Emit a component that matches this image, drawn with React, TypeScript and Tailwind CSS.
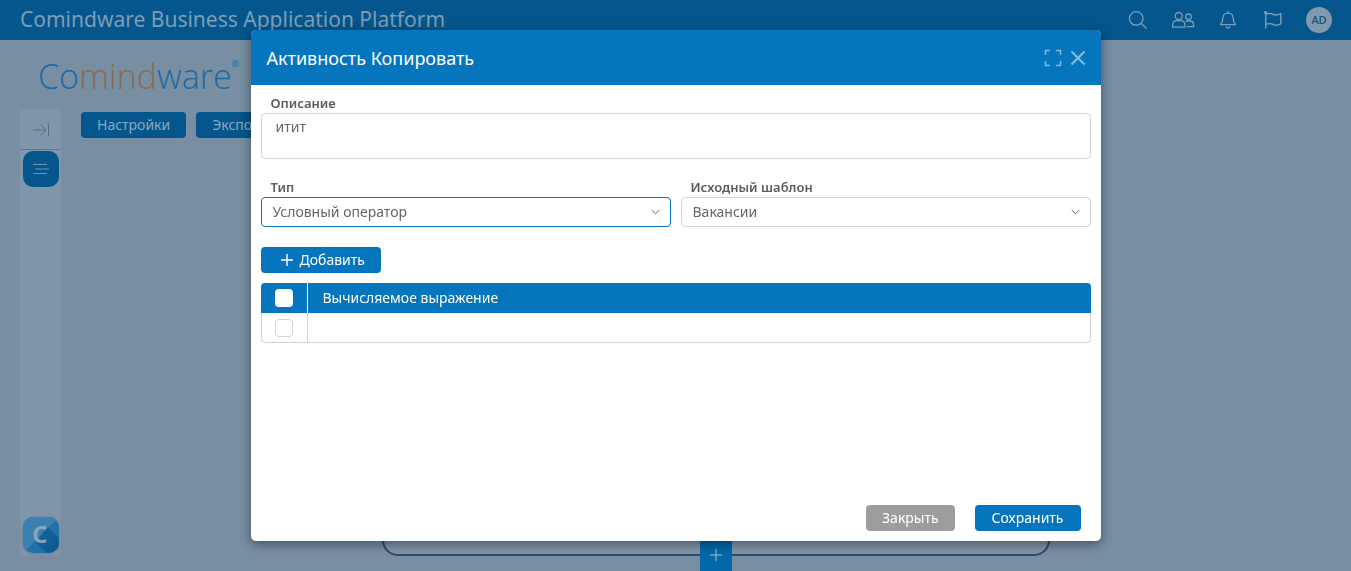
import type { ReactNode } from "react";

const primaryButton =
  "h-[26px] rounded bg-[#0575bd] text-sm leading-5 text-white";

function SearchIcon() {
  return (
    <svg width="20" height="20" viewBox="0 0 20 20" fill="none" stroke="currentColor" strokeWidth="1.3">
      <circle cx="8.2" cy="8.4" r="6.8" />
      <path d="M13.2 13.4 18.6 18.4" />
    </svg>
  );
}

function UsersIcon() {
  return (
    <svg width="24" height="20" viewBox="0 0 24 20" fill="none" stroke="currentColor" strokeWidth="1.3">
      <circle cx="7.8" cy="6" r="3.5" />
      <path d="M1.7 17.2v-2.4c0-2.6 1.8-4.2 4-4.2h4.2c2.2 0 4 1.6 4 4.2v2.4z" strokeLinejoin="round" />
      <circle cx="17.5" cy="6.8" r="2.8" />
      <path d="M14.6 11.5c.6-.4 1.2-.5 2-.5h2c2.2 0 4 1.5 4 3.8v1.9h-6.8" strokeLinejoin="round" />
    </svg>
  );
}

function BellIcon() {
  return (
    <svg width="20" height="20" viewBox="0 0 20 20" fill="none" stroke="currentColor" strokeWidth="1.3">
      <path
        d="M10 1.200v2M2.500 14.600c1.900-1.700 2.300-3.200 2.300-6.400 0-3 2.200-5 5.200-5s5.200 2 5.200 5c0 3.200.4 4.700 2.300 6.400z"
        strokeLinejoin="round"
        strokeLinecap="round"
      />
      <path d="M8 16.500c.3 1 1 1.400 2 1.400s1.700-.4 2-1.400" />
    </svg>
  );
}

function FlagIcon() {
  return (
    <svg width="20" height="20" viewBox="0 0 20 20" fill="none" stroke="currentColor" strokeWidth="1.4">
      <path d="M2.700 2v16.600" />
      <circle cx="2.7" cy="2.6" r="1" fill="currentColor" />
      <path
        d="M2.700 4.200c3.200-1.300 5.300-.9 7.600.2 2.200 1 4.600.6 7.500-.9v10.300c-2.900 1.500-5.300 1.700-7.500.7-2.300-1.100-4.400-1.300-7.600-.1"
        strokeLinejoin="round"
      />
    </svg>
  );
}

function ChevronIcon() {
  return (
    <svg
      className="pointer-events-none absolute right-[11px] top-2.5"
      width="9"
      height="10"
      viewBox="0 0 9 10"
      fill="none"
      stroke="#666"
    >
      <path d="M.7 3 4.500 6.800 8.300 3" />
    </svg>
  );
}

function BrandTile() {
  return (
    <svg width="36" height="36" viewBox="0 0 36 36" className="drop-shadow-sm">
      <defs>
        <clipPath id="tile">
          <rect width="36" height="36" rx="10" />
        </clipPath>
        <linearGradient id="shade" x1="0" y1="0" x2="1" y2="1">
          <stop offset="0" stopColor="#1468a0" />
          <stop offset="1" stopColor="#0b568e" />
        </linearGradient>
      </defs>
      <g clipPath="url(#tile)">
        <rect width="36" height="36" fill="#2171a8" />
        <path d="M0 0h36L0 36z" fill="#3a80b3" />
        <path d="M25 10 36 21v15H24L12 25z" fill="url(#shade)" />
      </g>
      <text x="17" y="26" textAnchor="middle" fontSize="24" fontWeight="700" fill="#8ba4b9">
        C
      </text>
    </svg>
  );
}

function TopButton({ label, children }: { label: string; children: ReactNode }) {
  return (
    <button type="button" aria-label={label} className="flex w-6 justify-center">
      {children}
    </button>
  );
}

function SelectField({ id, label, value, active }: { id: string; label: string; value: string; active?: boolean }) {
  return (
    <div className="flex-1">
      <label htmlFor={id} className="block px-2.5 text-[13px] font-semibold leading-5 text-[#5c5c5c]">
        {label}
      </label>
      <div className="relative">
        <select
          id={id}
          className={`block h-[30px] w-full appearance-none rounded border bg-white px-[11px] text-sm text-[#666] outline-none ${
            active ? "border-[#0575bd]" : "border-[#d4d4d4]"
          }`}
        >
          <option>{value}</option>
        </select>
        <ChevronIcon />
      </div>
    </div>
  );
}

function CopyDialog() {
  return (
    <div
      role="dialog"
      aria-labelledby="dialog-title"
      className="flex min-h-full w-full max-w-[850px] flex-col overflow-hidden rounded-[5px] bg-white shadow-[0_3px_12px_rgba(0,0,0,0.45)]"
    >
      <div className="flex h-[55px] shrink-0 items-center justify-between bg-[#0575bd] pl-4 pr-[15px]">
        <h2 id="dialog-title" className="text-lg text-white">
          Активность Копировать
        </h2>
        <div className="flex items-center gap-2 text-[#82bade]">
          <button type="button" aria-label="Развернуть">
            <svg width="18" height="18" viewBox="0 0 18 18" fill="none" stroke="currentColor" strokeWidth="1.5">
              <path d="M1.500 6V1.500H6M12 1.500h4.500V6M16.500 12v4.500H12M6 16.500H1.500V12" />
            </svg>
          </button>
          <button type="button" aria-label="Закрыть окно">
            <svg width="16" height="18" viewBox="0 0 16 18" fill="none" stroke="currentColor" strokeWidth="2.2">
              <path d="M1.500 2.500l13 13M14.500 2.500l-13 13" />
            </svg>
          </button>
        </div>
      </div>

      <div className="flex-1 px-2.5 pt-2">
        <label htmlFor="description" className="block px-2.5 text-[13px] font-semibold leading-5 text-[#5c5c5c]">
          Описание
        </label>
        <textarea
          id="description"
          defaultValue="итит"
          className="block h-[46px] w-full resize-none rounded border border-[#d4d4d4] px-3.5 py-[3px] text-sm leading-5 text-[#666] outline-none"
        />

        <div className="mt-[18px] flex gap-2.5">
          <SelectField id="type" label="Тип" value="Условный оператор" active />
          <SelectField id="template" label="Исходный шаблон" value="Вакансии" />
        </div>

        <button type="button" className={`${primaryButton} mt-5 flex items-center gap-[5px] px-4`}>
          <svg width="18" height="14" viewBox="0 0 18 14" fill="none" stroke="currentColor" strokeWidth="1.4">
            <path d="M10 1v12M4 7h12" />
          </svg>
          Добавить
        </button>

        <table className="mt-2.5 w-full table-fixed border-separate border-spacing-0">
          <thead>
            <tr className="h-[30px] text-sm text-white">
              <th className="w-[47px] rounded-tl border-r border-white bg-[#0575bd] p-0">
                <input
                  type="checkbox"
                  aria-label="Выбрать все"
                  className="mx-auto block h-[18px] w-[18px] appearance-none rounded bg-white"
                />
              </th>
              <th className="rounded-tr-sm bg-[#0575bd] px-[15px] py-0 text-left font-normal">
                Вычисляемое выражение
              </th>
            </tr>
          </thead>
          <tbody>
            <tr className="h-[30px]">
              <td className="rounded-bl-sm border border-t-0 border-[#d4d4d4] p-0">
                <input
                  type="checkbox"
                  aria-label="Выбрать строку"
                  className="mx-auto block h-[18px] w-[18px] appearance-none rounded border border-[#d4d4d4] bg-white"
                />
              </td>
              <td className="rounded-br-sm border-b border-r border-[#d4d4d4] p-0" />
            </tr>
          </tbody>
        </table>
      </div>

      <div className="flex justify-end gap-5 px-5 py-2.5">
        <button type="button" className="h-[26px] rounded bg-[#9d9d9d] px-4 text-sm leading-5 text-white">
          Закрыть
        </button>
        <button type="button" className={`${primaryButton} px-[17px]`}>
          Сохранить
        </button>
      </div>
    </div>
  );
}

export default function App() {
  return (
    <div className="flex h-screen flex-col overflow-hidden bg-[#788fa3] font-['Noto_Sans',sans-serif]">
      <header className="flex h-10 shrink-0 items-center justify-between bg-[#04568c] pl-5 pr-[19px] text-[#7d9db7]">
        <h1 className="text-[21px] text-[#7d9db7]">Comindware Business Application Platform</h1>
        <div className="flex items-center gap-[21px]">
          <TopButton label="Поиск">
            <SearchIcon />
          </TopButton>
          <TopButton label="Пользователи">
            <UsersIcon />
          </TopButton>
          <TopButton label="Уведомления">
            <BellIcon />
          </TopButton>
          <TopButton label="Задачи">
            <FlagIcon />
          </TopButton>
          <button
            type="button"
            className="h-[26px] w-[26px] rounded-full bg-[#8099ae] text-[11px] font-medium text-[#14507e]"
          >
            AD
          </button>
        </div>
      </header>

      <div className="flex h-[70px] shrink-0 items-start px-[38px] pt-3 font-['Open_Sans',sans-serif] text-[#1c699f]">
        <span className="text-[34px] font-light leading-[48px]">
          Co<span className="text-[#8a6b4f]">mind</span>ware
        </span>
        <span className="pt-1.5 text-[9px] leading-3">®</span>
      </div>

      <div className="flex min-h-0 flex-1 gap-5 pb-[15px] pl-5">
        <nav className="flex w-[41px] flex-col items-center rounded bg-[#8096aa] pb-[3px]">
          <button
            type="button"
            aria-label="Развернуть меню"
            className="flex h-10 w-full items-center justify-center border-b border-[#61788d] text-[#577087]"
          >
            <svg width="16" height="14" viewBox="0 0 16 14" fill="none" stroke="currentColor">
              <path d="M0 7h12.500M7.500 1.500 13 7l-5.500 5.500M15.500.5v13" />
            </svg>
          </button>
          <button
            type="button"
            aria-label="Меню"
            className="mt-px flex h-9 w-9 items-center justify-center rounded-[10px] bg-[#04568c] text-[#6f97b5]"
          >
            <svg width="18" height="12" viewBox="0 0 18 12" fill="none" stroke="currentColor">
              <path d="M1 1.500h14M3 6h14M1 10.500h14" />
            </svg>
          </button>
          <a href="#" aria-label="Comindware" className="mt-auto">
            <BrandTile />
          </a>
        </nav>

        <main className="flex min-w-0 flex-1 flex-col">
          <div className="flex gap-2.5 pt-0.5">
            <button type="button" className="h-[26px] rounded bg-[#04568c] px-4 text-sm leading-5 text-[#8aa9c1]">
              Настройки
            </button>
            <button type="button" className="h-[26px] rounded bg-[#04568c] px-4 text-sm leading-5 text-[#8aa9c1]">
              Экспорт
            </button>
          </div>
          <div className="relative mx-auto mt-5 w-[668px] flex-1 rounded-2xl border-2 border-[#304b66] bg-[#8096aa]">
            <button
              type="button"
              aria-label="Добавить действие"
              className="absolute -bottom-[17px] left-1/2 flex h-8 w-8 -translate-x-1/2 items-center justify-center bg-[#0268aa] text-[#7fa2bd]"
            >
              <svg width="12" height="12" viewBox="0 0 12 12" fill="none" stroke="currentColor" strokeWidth="1.5">
                <path d="M6 0v12M0 6h12" />
              </svg>
            </button>
          </div>
        </main>
      </div>

      <div className="fixed inset-0 flex justify-center py-[30px]">
        <CopyDialog />
      </div>
    </div>
  );
}
